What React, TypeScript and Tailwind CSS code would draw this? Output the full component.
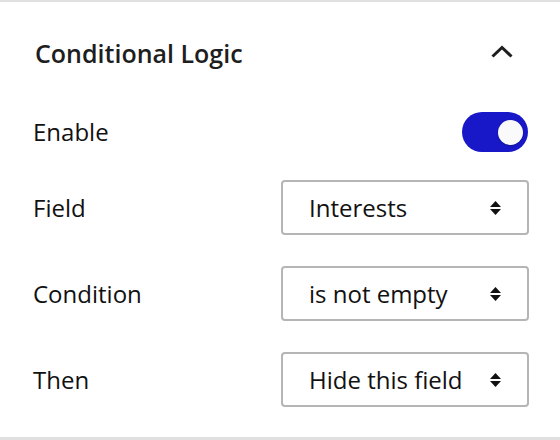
import React from "react";

function SortIcon() {
  return (
    <svg width="11" height="14" viewBox="0 0 11 14" className="shrink-0">
      <path d="M5.5 0 L11 6 L0 6 Z" fill="#111" />
      <path d="M0 8 L11 8 L5.5 14 Z" fill="#111" />
    </svg>
  );
}

function Select({ value }: { value: string }) {
  return (
    <div className="w-[248px] h-[55px] border-2 border-[#b5b5b5] rounded-[4px] flex items-center justify-between pl-[26px] pr-[26px] bg-white">
      <span className="text-[24px] leading-[30px] text-[#111]">{value}</span>
      <SortIcon />
    </div>
  );
}

function Row({ label, children, className = "" }: { label: string; children: React.ReactNode; className?: string }) {
  return (
    <div className={"flex items-center justify-between " + className}>
      <span className="text-[24px] leading-[40px] text-[#111]">{label}</span>
      {children}
    </div>
  );
}

export default function App() {
  return (
    <div
      className="w-[560px] h-[440px] bg-white border-t-2 border-b-[3px] border-[#e0e0e0] pl-[33px] pr-[31px] flex flex-col"
      style={{ fontFamily: '"Open Sans", "Noto Sans", sans-serif' }}
    >
      <div className="flex items-center justify-between h-[30px] mt-[36px]">
        <h2 className="text-[25px] leading-[30px] font-semibold text-[#1e1e1e] ml-[2px]">Conditional Logic</h2>
        <svg width="24" height="24" viewBox="0 0 24 24" className="mr-[15px] mt-[3px]">
          <path d="M2.5 13.5 L12 4.5 L21.5 13.5" fill="none" stroke="#1e1e1e" strokeWidth="3" />
        </svg>
      </div>
      <Row label="Enable" className="h-[40px] mt-[44px]">
        <button className="w-[66px] h-[40px] rounded-full bg-[#1818c8] flex items-center justify-end pr-[5px] mr-[1px]">
          <span className="w-[25px] h-[25px] rounded-full bg-[#fafafa] shadow-[0_1px_2px_rgba(0,0,0,0.25)]" />
        </button>
      </Row>
      <Row label="Field" className="mt-[28px]">
        <Select value="Interests" />
      </Row>
      <Row label="Condition" className="mt-[31px]">
        <Select value="is not empty" />
      </Row>
      <Row label="Then" className="mt-[31px]">
        <Select value="Hide this field" />
      </Row>
    </div>
  );
}
